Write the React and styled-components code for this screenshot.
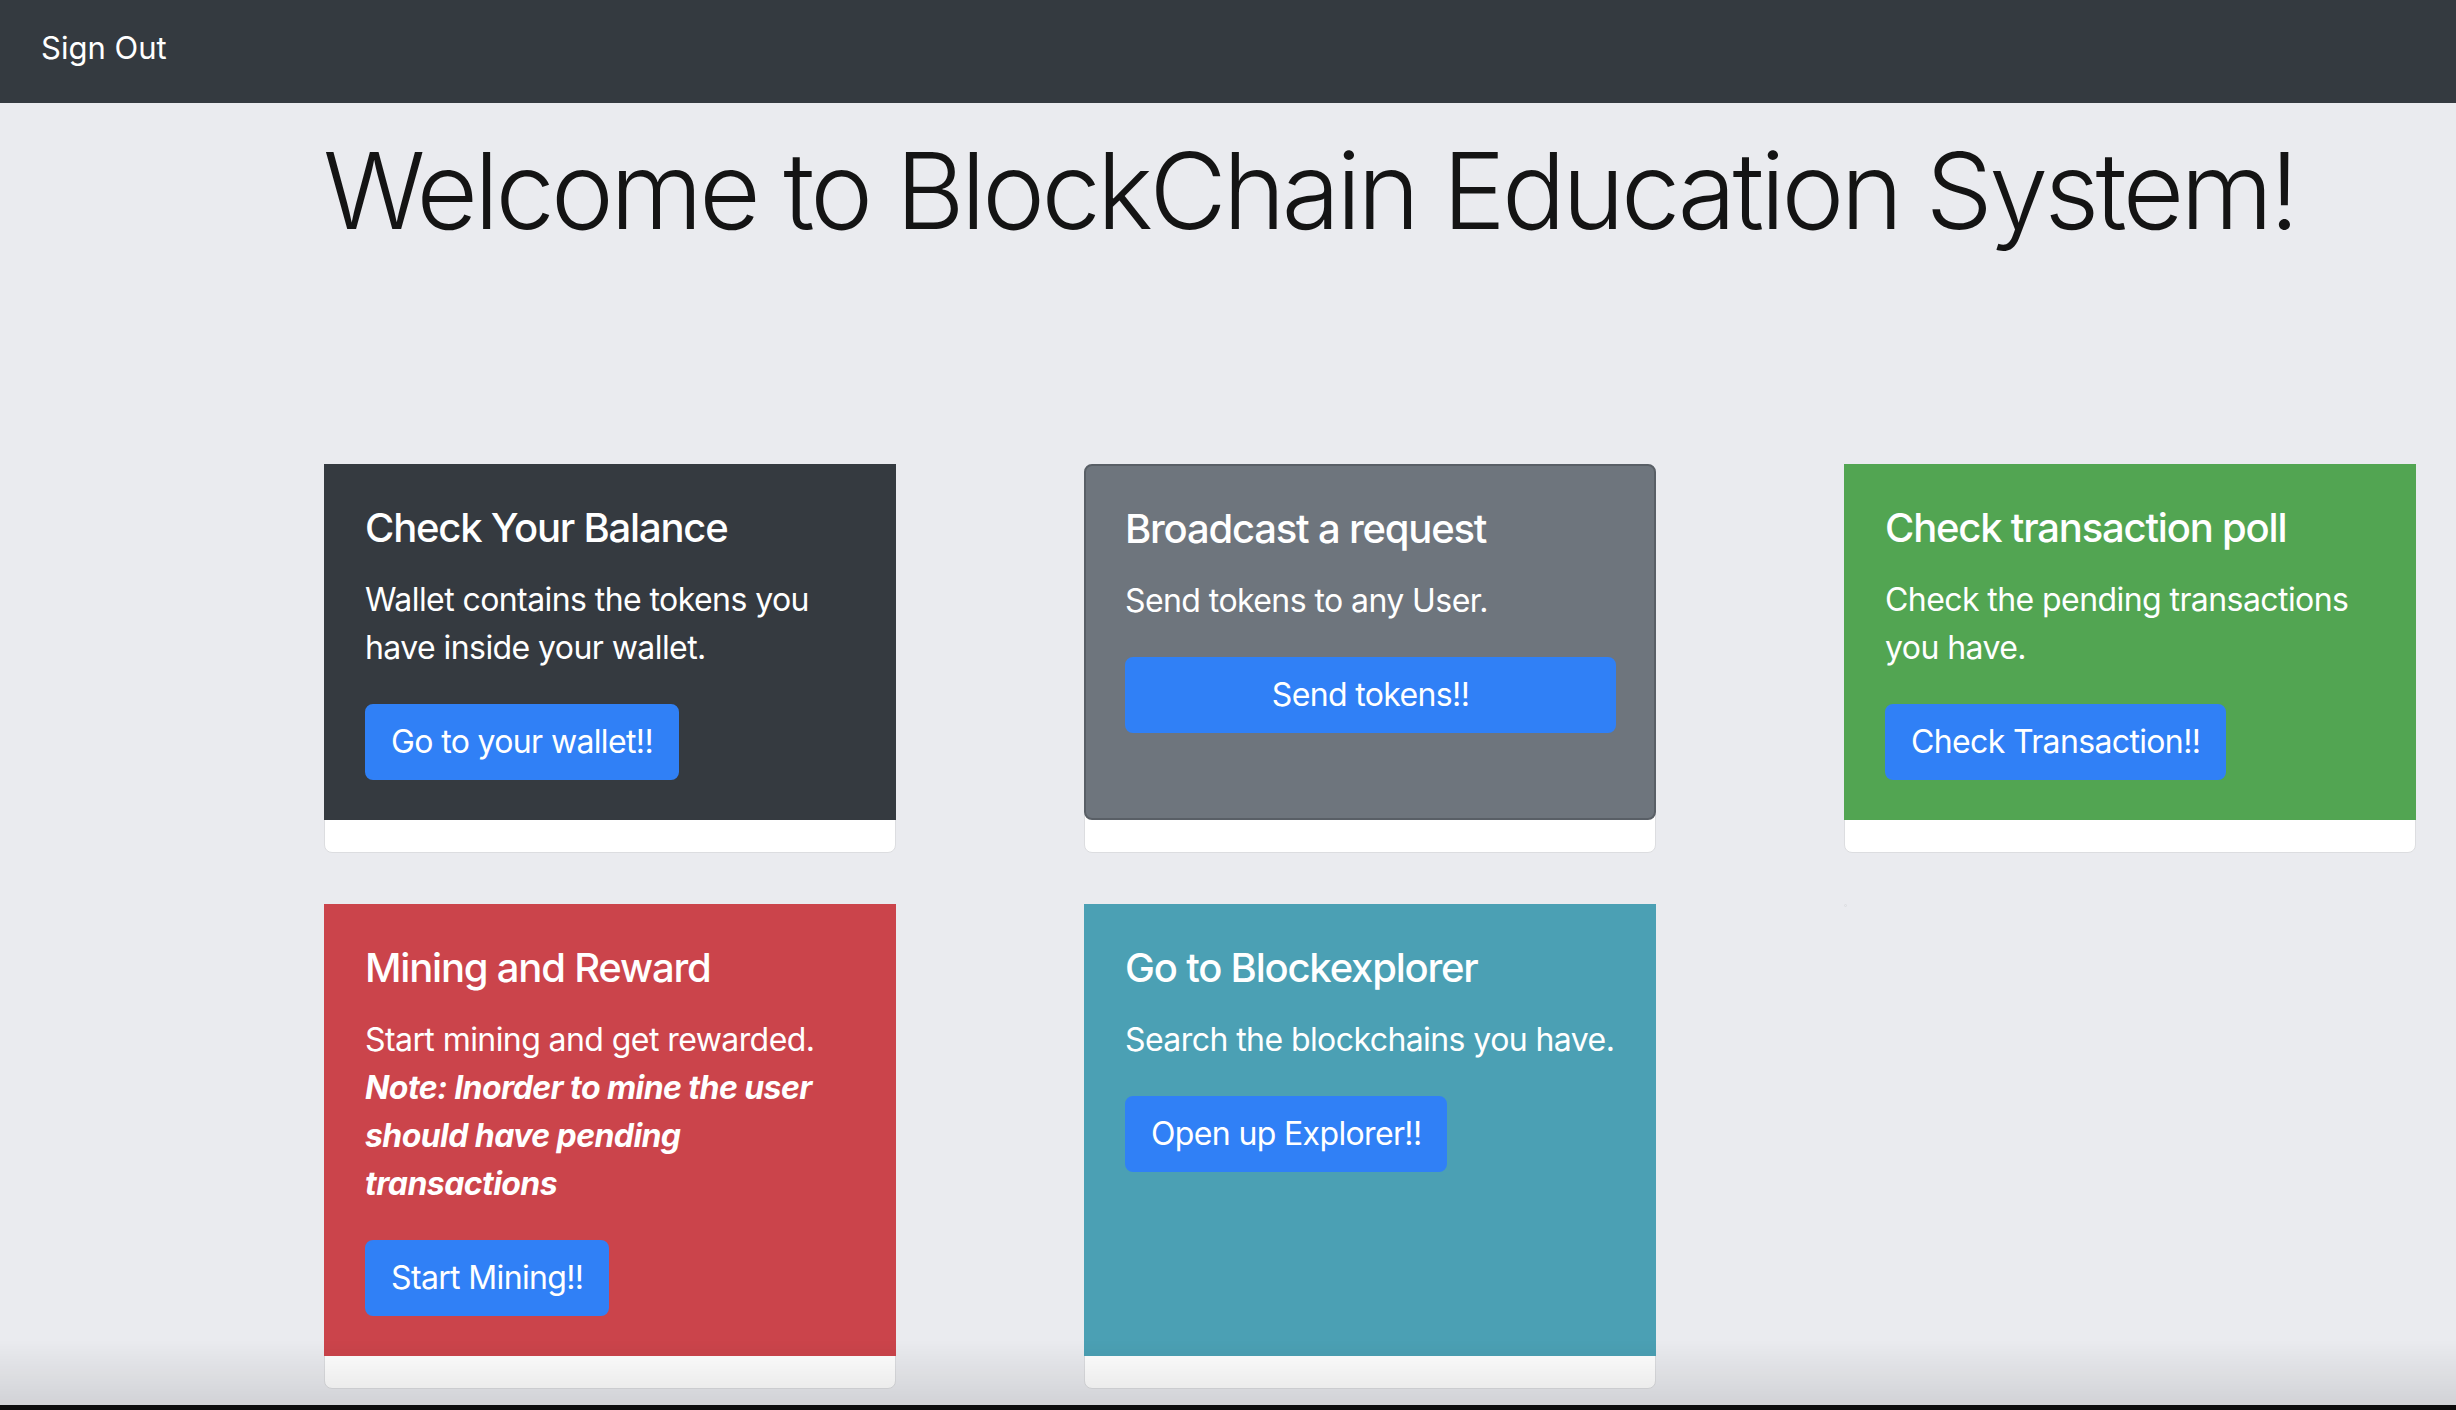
import React from 'react';
import styled, { createGlobalStyle, css } from 'styled-components';

const colors = {
  page: '#eaebef',
  nav: '#343a40',
  ink: '#141414',
  white: '#ffffff',
  primary: '#3080f6',
  dark: '#353a40',
  secondary: '#6e757d',
  success: '#52a552',
  danger: '#cb444b',
  info: '#4ba0b4',
};

const GlobalStyle = createGlobalStyle`
  html, body {
    margin: 0;
    padding: 0;
    background: ${colors.page};
  }

  body {
    font-family: Inter, "Noto Sans", "Liberation Sans", sans-serif;
    color: ${colors.ink};
    overflow: hidden;
  }

  * {
    box-sizing: border-box;
  }
`;

const Page = styled.div`
  min-height: 100vh;
  position: relative;
`;

const Nav = styled.nav`
  align-items: center;
  background-color: ${colors.nav};
  display: flex;
  height: 103px;
  padding: 0 0 6px 41px;
`;

const NavItem = styled.a`
  color: ${colors.white};
  cursor: pointer;
  font-size: 31px;
  line-height: 1.5;
  text-decoration: none;
`;

const Main = styled.main`
  padding: 24px 0 0 324px;
`;

const Heading = styled.h1`
  font-size: 106px;
  font-weight: 300;
  letter-spacing: -0.034em;
  line-height: 1.2;
  margin: 0 0 0 -1px;
  white-space: nowrap;
`;

const Deck = styled.div`
  display: grid;
  grid-template-columns: repeat(3, 572px);
  column-gap: 188px;
  row-gap: 51px;
  margin-top: 210px;
  align-items: stretch;
`;

const Card = styled.div`
  background: ${colors.white};
  border: 1px solid #dcdde0;
  border-radius: 8px;
  display: flex;
  flex-direction: column;
`;

const CardBody = styled.div`
  background-color: ${props => props.bg};
  color: ${colors.white};
  flex: 1;
  padding: 40px 38px 40px 41px;
  margin: -1px -1px 0;

  ${props =>
    props.bordered &&
    css`
      border: 2px solid #595f66;
      border-radius: 8px;
      padding: 39px 38px 38px 39px;
    `}
`;

const CardFooter = styled.div`
  height: 32px;
`;

const CardTitle = styled.h5`
  font-size: 40px;
  font-weight: 500;
  letter-spacing: -0.03em;
  line-height: 1.2;
  margin: 0 0 24px;
`;

const CardText = styled.p`
  font-size: 32px;
  letter-spacing: -0.018em;
  line-height: 1.5;
  margin: 0 0 32px;
`;

const Note = styled.b`
  font-style: italic;
  font-weight: 700;
`;

const Button = styled.a`
  background-color: ${colors.primary};
  border: 2px solid ${colors.primary};
  border-radius: 8px;
  color: ${colors.white};
  cursor: pointer;
  display: ${props => (props.block ? 'block' : 'inline-block')};
  font-size: 32px;
  letter-spacing: -0.02em;
  line-height: 1.5;
  padding: 12px 24px;
  text-align: center;
  text-decoration: none;
`;

const EmptyCard = styled.div`
  align-self: start;
  border: 1px solid #dcdde0;
  border-radius: 2px;
  height: 3px;
  width: 3px;
`;

const BottomShade = styled.div`
  background: linear-gradient(to bottom, rgba(0, 0, 0, 0), rgba(0, 0, 0, 0.1));
  border-bottom: 5px solid #0d0d0d;
  bottom: 0;
  height: 70px;
  left: 0;
  pointer-events: none;
  position: fixed;
  right: 0;
`;

const cards = [
  {
    bg: colors.dark,
    title: 'Check Your Balance',
    text: 'Wallet contains the tokens you have inside your wallet.',
    action: 'Go to your wallet!!',
  },
  {
    bg: colors.secondary,
    bordered: true,
    title: 'Broadcast a request',
    text: 'Send tokens to any User.',
    action: 'Send tokens!!',
    block: true,
  },
  {
    bg: colors.success,
    title: 'Check transaction poll',
    text: 'Check the pending transactions you have.',
    action: 'Check Transaction!!',
  },
  {
    bg: colors.danger,
    title: 'Mining and Reward',
    text: 'Start mining and get rewarded.',
    note: 'Note: Inorder to mine the user should have pending transactions',
    action: 'Start Mining!!',
  },
  {
    bg: colors.info,
    title: 'Go to Blockexplorer',
    text: 'Search the blockchains you have.',
    action: 'Open up Explorer!!',
  },
];

const App = () => (
  <Page>
    <GlobalStyle />
    <Nav role="navigation" aria-label="main-navigation">
      <NavItem>Sign Out</NavItem>
    </Nav>
    <Main>
      <Heading>Welcome to BlockChain Education System!</Heading>
      <Deck>
        {cards.map(card => (
          <Card key={card.title}>
            <CardBody bg={card.bg} bordered={card.bordered}>
              <CardTitle>{card.title}</CardTitle>
              <CardText>
                {card.text}
                {card.note && (
                  <>
                    <br />
                    <Note>{card.note}</Note>
                  </>
                )}
              </CardText>
              <Button block={card.block}>{card.action}</Button>
            </CardBody>
            <CardFooter />
          </Card>
        ))}
        <EmptyCard />
      </Deck>
    </Main>
    <BottomShade />
  </Page>
);

export default App;
